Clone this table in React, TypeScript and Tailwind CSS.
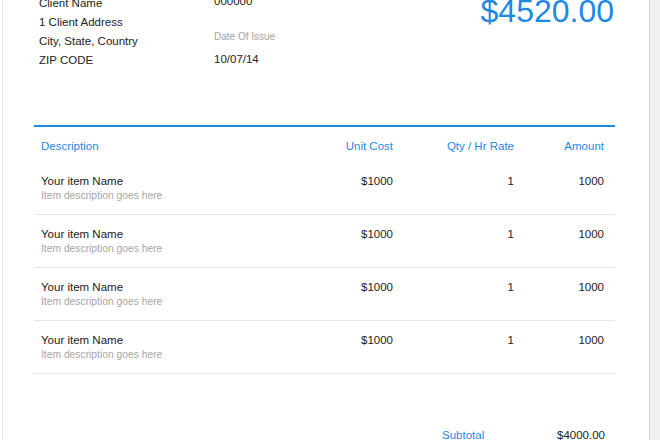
const items = [
  { name: 'Your item Name', desc: 'Item description goes here', cost: '$1000', qty: '1', amount: '1000' },
  { name: 'Your item Name', desc: 'Item description goes here', cost: '$1000', qty: '1', amount: '1000' },
  { name: 'Your item Name', desc: 'Item description goes here', cost: '$1000', qty: '1', amount: '1000' },
  { name: 'Your item Name', desc: 'Item description goes here', cost: '$1000', qty: '1', amount: '1000' },
];

export default function App() {
  return (
    <div
      className="flex h-[440px] w-[660px] overflow-hidden bg-white text-[#222]"
      style={{ fontFamily: '"Liberation Sans", Arial, sans-serif' }}
    >
      <div className="w-[2px] shrink-0 bg-white" />

      {/* Invoice paper */}
      <div className="w-[648px] shrink-0 border-x border-l-[#e4e4e8] border-r-[#d3d3d8] bg-white pl-[31px] pr-[34px]">
        {/* Client / invoice meta */}
        <div className="flex items-start">
          <div className="-mt-[6px] ml-[5px] w-[175px] text-[11.5px] leading-[19px]">
            <div>Client Name</div>
            <div>1 Client Address</div>
            <div>City, State, Country</div>
            <div>ZIP CODE</div>
          </div>
          <div className="-mt-[8px] flex-1 text-[11.5px] leading-[19px]">
            <div>000000</div>
            <div className="mt-[19px] text-[10px] leading-[14px] text-[#a3a3a3]">Date Of Issue</div>
            <div className="mt-[6px]">10/07/14</div>
          </div>
          <div className="-mt-[5px] mr-[1px] text-[32px] leading-[32px] text-[#1e88e5]">$4520.00</div>
        </div>

        {/* Items table */}
        <div className="mt-[55px] border-t-2 border-[#1e88e5]">
          <div className="flex pb-[8px] pl-[7px] pr-[11px] pt-[11px] text-[11.5px] leading-[16px] text-[#1e88e5]">
            <div className="flex-1">Description</div>
            <div className="w-[100px] text-right">Unit Cost</div>
            <div className="w-[121px] text-right">Qty / Hr Rate</div>
            <div className="w-[90px] text-right">Amount</div>
          </div>

          {items.map((item, i) => (
            <div key={i} className="flex border-b border-[#e6e6e6] py-[11px] pl-[7px] pr-[11px]">
              <div className="flex-1">
                <div className="text-[11.5px] leading-[16px]">{item.name}</div>
                <div className="text-[10.3px] leading-[14px] text-[#a6a6a6]">{item.desc}</div>
              </div>
              <div className="w-[100px] text-right text-[11.5px] leading-[16px]">{item.cost}</div>
              <div className="w-[121px] text-right text-[11.5px] leading-[16px]">{item.qty}</div>
              <div className="w-[90px] text-right text-[11.5px] leading-[16px]">{item.amount}</div>
            </div>
          ))}
        </div>

        {/* Totals */}
        <div className="mt-[53px] flex justify-end pr-[10px] text-[11.5px] leading-[16px]">
          <div className="w-[72px] text-[#1e88e5]">Subtotal</div>
          <div className="w-[91px] text-right">$4000.00</div>
        </div>
      </div>

      <div className="flex-1 bg-[#f1f1f3]" />
    </div>
  );
}
